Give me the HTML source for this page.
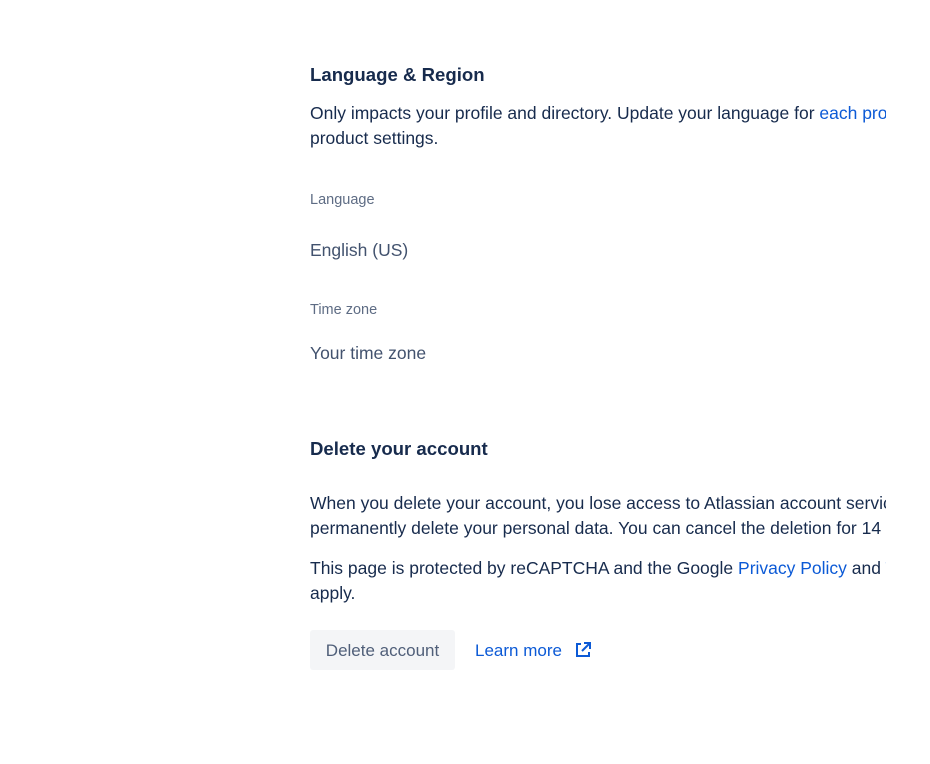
<!DOCTYPE html>
<html><head><style>
body{margin:0;background:#fff;width:930px;height:764px;overflow:hidden;font-family:"Liberation Sans",sans-serif;color:#172b4d}
.c{position:absolute;left:310px;top:0;width:576px;height:764px;overflow:hidden}
.a{position:absolute;left:0;white-space:nowrap}
h2{margin:0;font-size:18.6px;font-weight:bold;position:absolute;left:0}
p{margin:0;font-size:17.5px;line-height:25px;position:absolute;left:0;white-space:nowrap}
a{color:#0c5ad6;text-decoration:none}
.l{font-size:14.5px;color:#5e6c84}
.v{font-size:17.5px;color:#42526e}
.btn{position:absolute;left:0;top:630px;width:145px;height:40px;background:#f4f5f7;border-radius:3px;color:#505f79;font-size:17px;line-height:41px;text-align:center}
</style></head><body><div class="c">
<h2 style="top:64px">Language &amp; Region</h2>
<p style="top:101px">Only impacts your profile and directory. Update your language for <a>each product in your</a><br>product settings.</p>
<div class="a l" style="top:192px">Language</div>
<div class="a v" style="top:240px">English (US)</div>
<div class="a l" style="top:302px">Time zone</div>
<div class="a v" style="top:343px">Your time zone</div>
<h2 style="top:438px">Delete your account</h2>
<p style="top:491px">When you delete your account, you lose access to Atlassian account services, and we<br>permanently delete your personal data. You can cancel the deletion for 14 days.</p>
<p style="top:556px">This page is protected by reCAPTCHA and the Google <a>Privacy Policy</a> and <a>Terms of Service</a><br>apply.</p>
<div class="btn">Delete account</div>
<div class="a" style="left:165px;top:641px;font-size:17px;color:#0c5ad6">Learn more</div>
<svg style="position:absolute;left:264px;top:641px" width="18" height="18" viewBox="0 0 18 18" fill="none" stroke="#0c5ad6" stroke-width="2"><path d="M7 3H3v12h12v-4M10 2h6v6M16 2l-8 8"/></svg>
</div></body></html>
